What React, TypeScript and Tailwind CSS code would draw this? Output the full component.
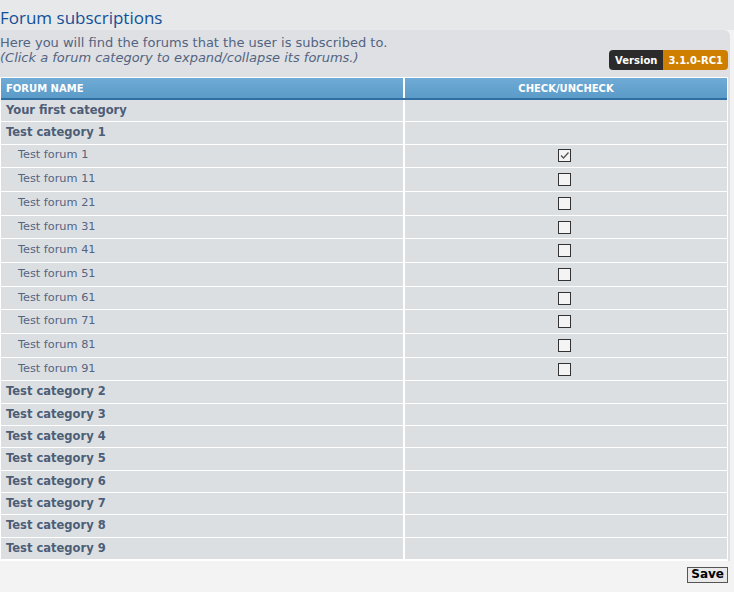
const forums = ["1", "11", "21", "31", "41", "51", "61", "71", "81", "91"];
const laterCats = ["2", "3", "4", "5", "6", "7", "8", "9"];

function Box({ checked }: { checked?: boolean }) {
  return (
    <span className="flex h-[13px] w-[13px] items-center justify-center border border-[#333] bg-[#f4f4f4]">
      {checked && (
        <svg width="11" height="11" viewBox="0 0 11 11">
          <path d="M2 5.5 L4.5 8 L9.5 2.5" fill="none" stroke="#555" strokeWidth="1.3" />
        </svg>
      )}
    </span>
  );
}

function CatRow({ name }: { name: string }) {
  return (
    <div className="grid h-[22.3px] grid-cols-[402px_1fr] gap-x-[2px] border-b border-white">
      <div className="flex items-center bg-[#dcdfe2] pl-[5px] text-[11.5px] font-bold text-[#4c5d77]">{name}</div>
      <div className="bg-[#dcdfe2]" />
    </div>
  );
}

function ForumRow({ name, checked }: { name: string; checked?: boolean }) {
  return (
    <div className="grid h-[23.7px] grid-cols-[402px_1fr] gap-x-[2px] border-b border-white">
      <div className="flex items-center bg-[#dcdfe2] pl-[17px] text-[11.3px] text-[#536482]">{name}</div>
      <div className="flex items-center justify-center bg-[#dcdfe2] pr-[3px]">
        <Box checked={checked} />
      </div>
    </div>
  );
}

export default function App() {
  return (
    <div className="flex h-[592px] w-[734px] flex-col bg-[#f3f3f3] font-['DejaVu_Sans',Verdana,sans-serif]">
      <div className="h-[30px] bg-[#e7e8ea] pt-[7px]">
        <h1 className="font-['Open_Sans',sans-serif] text-[17px] leading-[22px] text-[#115098]">Forum subscriptions</h1>
      </div>
      <div className="w-[730px] rounded-tr-[6px] bg-[#dee0e3] pt-[5px]">
        <div className="flex items-end justify-between pb-[7px] pr-[2px]">
          <div className="pb-[5px] text-[13px] leading-[15px] text-[#536482]">
            <p>Here you will find the forums that the user is subscribed to.</p>
            <p className="italic">(Click a forum category to expand/collapse its forums.)</p>
          </div>
          <div className="flex h-[20px] overflow-hidden rounded-[4px] text-[10px] font-bold text-white">
            <span className="flex items-center bg-[#2b2b2b] px-[6px]">Version</span>
            <span className="flex items-center bg-[#cf7f00] px-[5px]">3.1.0-RC1</span>
          </div>
        </div>
        <div className="w-[728px] border border-white bg-white">
          <div className="grid h-[22px] grid-cols-[402px_1fr] gap-x-[2px] border-b-2 border-[#2f6fa3]">
            <div className="flex items-center bg-gradient-to-b from-[#6fabd5] to-[#5b9bc8] pl-[5px] text-[10px] font-bold text-white">FORUM NAME</div>
            <div className="flex items-center justify-center bg-gradient-to-b from-[#6fabd5] to-[#5b9bc8] text-[10px] font-bold text-white">CHECK/UNCHECK</div>
          </div>
          <CatRow name="Your first category" />
          <CatRow name="Test category 1" />
          {forums.map((f, i) => (
            <ForumRow key={f} name={`Test forum ${f}`} checked={i === 0} />
          ))}
          {laterCats.map((c) => (
            <CatRow key={c} name={`Test category ${c}`} />
          ))}
        </div>
      </div>
      <div className="flex justify-end pr-[6px] pt-[6px]">
        <button className="h-[16px] border border-[#555] bg-[#e9e9e9] px-[3px] text-[12px] font-bold leading-[13px] text-black">Save</button>
      </div>
    </div>
  );
}
